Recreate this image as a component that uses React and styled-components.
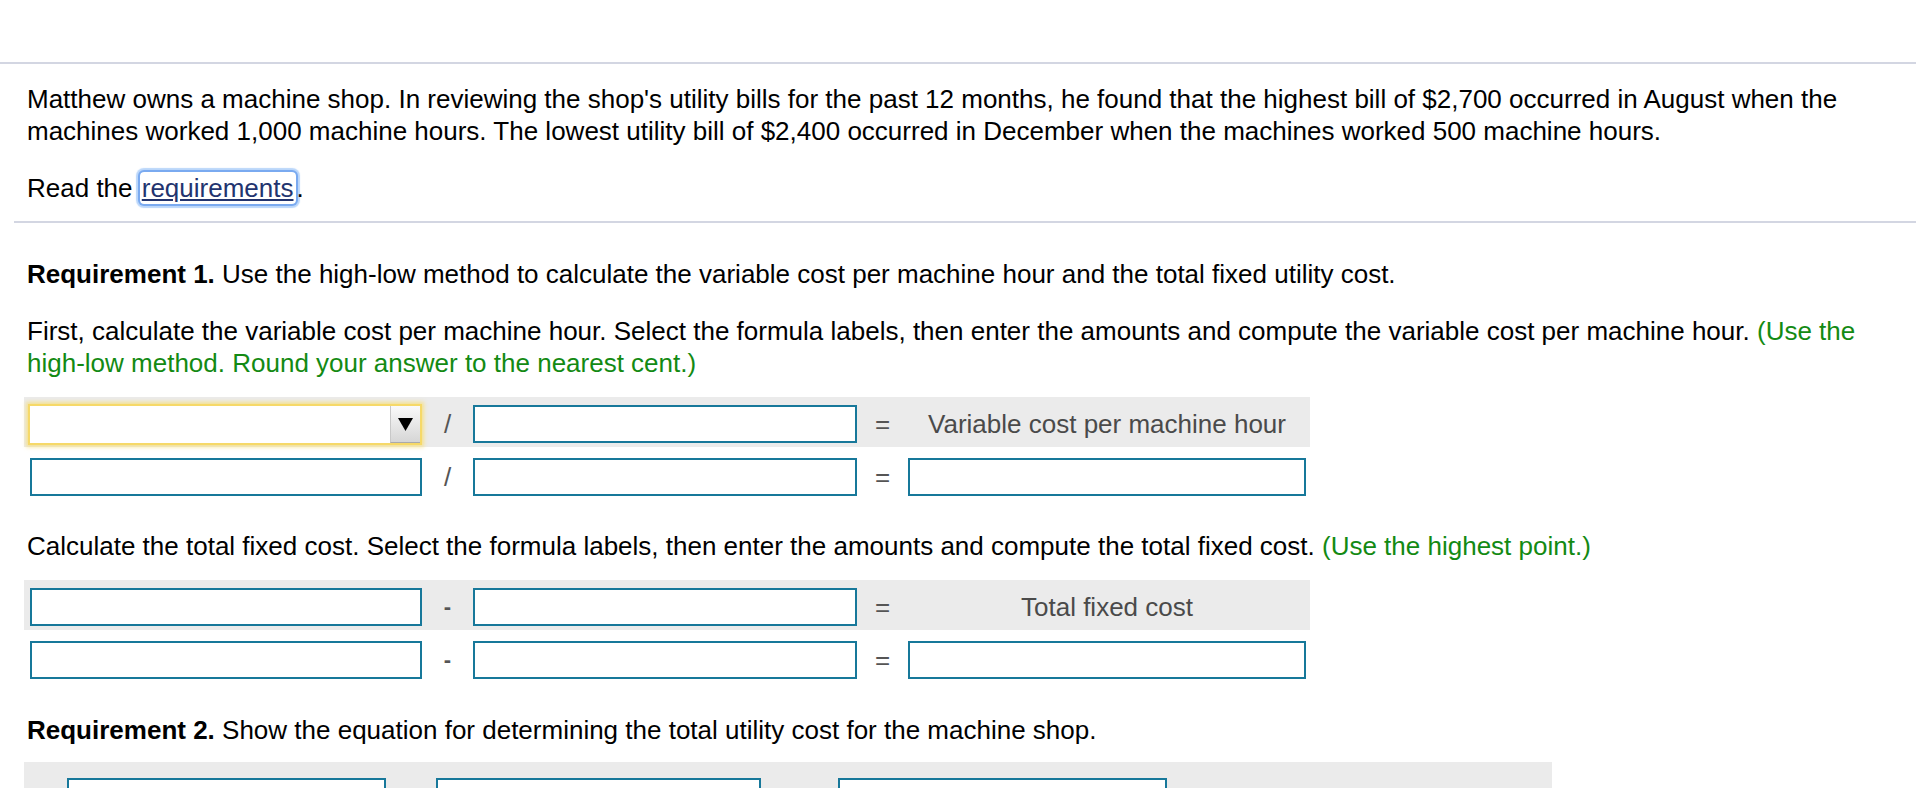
import React from "react";
import styled, { createGlobalStyle } from "styled-components";

const Global = createGlobalStyle`
  html, body { margin: 0; padding: 0; background: #fff; overflow: hidden; }
  body {
    font-family: "Liberation Sans", Arial, Helvetica, sans-serif;
    font-size: 26px;
    color: #000;
  }
`;

const Page = styled.div`
  padding-top: 62px;
  width: 1916px;
`;

const Rule = styled.div`
  height: 2px;
  background: #d3d6e2;
  margin: ${(p) => p.$mt || 0}px 0 0 ${(p) => p.$ml || 0}px;
`;

const Section = styled.div`
  padding: 0 30px 0 27px;
`;

const Para = styled.p`
  margin: ${(p) => p.$mt || 0}px 0 0;
  line-height: 32px;
`;

const Strong = styled.b`
  font-weight: 700;
`;

const Hint = styled.span`
  color: #138a13;
`;

const Link = styled.a`
  color: #22346f;
  text-decoration: underline;
  text-underline-offset: 2px;
  border-radius: 4px;
  padding: 1px 3px 1px 2px;
  box-shadow: 0 0 0 2px #7aaaf0, 0 0 1px 4px rgba(140, 186, 246, 0.6);
`;

const Row = styled.div`
  box-sizing: border-box;
  display: grid;
  grid-template-columns: 392px 51px 384px 51px 398px;
  align-items: start;
  width: 1286px;
  height: 50px;
  padding: 8px 4px 0 6px;
  margin: ${(p) => p.$mt || 0}px 0 0 -3px;
  background: ${(p) => (p.$shaded ? "#ebebeb" : "transparent")};
`;

const Op = styled.div`
  height: 38px;
  display: flex;
  align-items: center;
  justify-content: center;
  color: #555;
  font-size: ${(p) => (p.$small ? "22px" : "26px")};
  font-weight: ${(p) => (p.$small ? 700 : 400)};
`;

const Field = styled.input`
  box-sizing: border-box;
  width: 100%;
  height: 38px;
  margin: 0;
  padding: 0 6px;
  border: 2px solid #17789a;
  border-radius: 0;
  background: #fff;
  outline: none;
  font: inherit;
`;

const Label = styled.div`
  height: 38px;
  line-height: 38px;
  text-align: center;
  color: #4a4a4a;
  white-space: nowrap;
`;

const Select = styled.div`
  box-sizing: border-box;
  display: flex;
  justify-content: flex-end;
  width: 394px;
  height: 41px;
  margin: -1px 0 0 -2px;
  border: 2px solid #f6d968;
  background: #fff;
  box-shadow: 0 0 4px 2px rgba(248, 222, 120, 0.8);
`;

const DropButton = styled.div`
  width: 30px;
  height: 100%;
  display: flex;
  align-items: center;
  justify-content: center;
  background: linear-gradient(#fafafa, #d6d6d6);
  border-left: 1px solid #c8c8c8;
  border-bottom: 1px solid #aaa;
  box-sizing: border-box;
`;

const Band = styled.div`
  box-sizing: border-box;
  display: grid;
  grid-template-columns: 319px 50px 325px 77px 329px;
  align-items: start;
  width: 1528px;
  height: 60px;
  padding: 16px 0 0 43px;
  margin: 16px 0 0 -3px;
  background: #ebebeb;
`;

const Spacer = styled.div``;

function Arrow() {
  return (
    <svg width="15" height="13" viewBox="0 0 15 13">
      <polygon points="0,0 15,0 7.5,13" fill="#000" />
    </svg>
  );
}

export default function App() {
  return (
    <>
      <Global />
      <Page>
        <Rule />
        <Section>
          <Para $mt={19}>
            Matthew owns a machine shop. In reviewing the shop's utility bills
            for the past 12 months, he found that the highest bill of $2,700
            occurred in August when the machines worked 1,000 machine hours. The
            lowest utility bill of $2,400 occurred in December when the machines
            worked 500 machine hours.
          </Para>
          <Para $mt={25}>
            Read the <Link href="#">requirements</Link>.
          </Para>
        </Section>
        <Rule $mt={17} $ml={14} />
        <Section>
          <Para $mt={35}>
            <Strong>Requirement 1.</Strong> Use the high-low method to calculate
            the variable cost per machine hour and the total fixed utility cost.
          </Para>
          <Para $mt={25}>
            First, calculate the variable cost per machine hour. Select the
            formula labels, then enter the amounts and compute the variable cost
            per machine hour.{" "}
            <Hint>
              (Use the high-low method. Round your answer to the nearest cent.)
            </Hint>
          </Para>

          <Row $shaded $mt={18}>
            <Select>
              <DropButton>
                <Arrow />
              </DropButton>
            </Select>
            <Op>/</Op>
            <Field readOnly />
            <Op>=</Op>
            <Label>Variable cost per machine hour</Label>
          </Row>
          <Row $mt={3}>
            <Field readOnly />
            <Op>/</Op>
            <Field readOnly />
            <Op>=</Op>
            <Field readOnly />
          </Row>

          <Para $mt={30}>
            Calculate the total fixed cost. Select the formula labels, then enter
            the amounts and compute the total fixed cost.{" "}
            <Hint>(Use the highest point.)</Hint>
          </Para>

          <Row $shaded $mt={18}>
            <Field readOnly />
            <Op $small>-</Op>
            <Field readOnly />
            <Op>=</Op>
            <Label>Total fixed cost</Label>
          </Row>
          <Row $mt={3}>
            <Field readOnly />
            <Op $small>-</Op>
            <Field readOnly />
            <Op>=</Op>
            <Field readOnly />
          </Row>

          <Para $mt={31}>
            <Strong>Requirement 2.</Strong> Show the equation for determining the
            total utility cost for the machine shop.
          </Para>

          <Band>
            <Field readOnly />
            <Spacer />
            <Field readOnly />
            <Spacer />
            <Field readOnly />
          </Band>
        </Section>
      </Page>
    </>
  );
}
